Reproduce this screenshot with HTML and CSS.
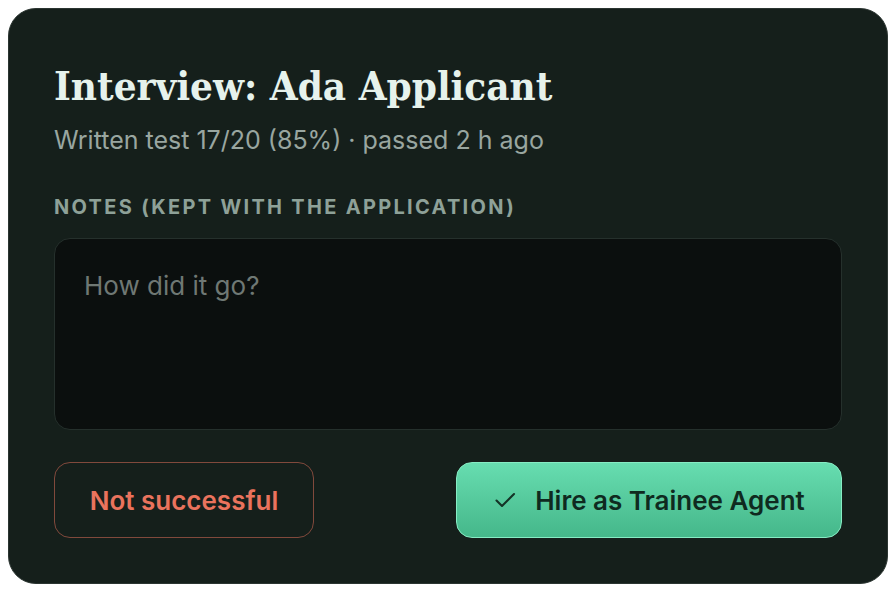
FILE: index.html
```html
<!DOCTYPE html>
<html>
<head>
<meta charset="utf-8">
<link rel="stylesheet" href="styles.css">
</head>
<body>
<div class="card">
  <h1 class="title">Interview: Ada Applicant</h1>
  <p class="subtitle">Written test 17/20 (85%) · passed 2 h ago</p>
  <label class="label" for="notes">NOTES (KEPT WITH THE APPLICATION)</label>
  <textarea id="notes" class="notes" placeholder="How did it go?"></textarea>
  <div class="actions">
    <button class="btn btn-reject">Not successful</button>
    <button class="btn btn-hire">
      <svg class="check" width="24" height="24" viewBox="0 0 24 24" fill="none" stroke="currentColor" stroke-width="2.1" stroke-linecap="round" stroke-linejoin="round"><path d="M3.5 12.5l5.5 5.5L21 6"/></svg>
      <span>Hire as Trainee Agent</span>
    </button>
  </div>
</div>
</body>
</html>
```
FILE: styles.css
```css
html, body {
  margin: 0;
  padding: 0;
  background: #ffffff;
}
body {
  padding: 8px;
  font-family: Inter, "Noto Sans", sans-serif;
}
.card {
  box-sizing: border-box;
  width: 880px;
  height: 576px;
  background: #151f1b;
  border: 1px solid #2b3531;
  border-radius: 28px;
  padding: 53px 45px 45px 45px;
  display: flex;
  flex-direction: column;
}
.title {
  margin: 0;
  font-family: "DejaVu Serif Condensed", "DejaVu Serif", serif;
  font-stretch: condensed;
  font-weight: 700;
  font-size: 40px;
  line-height: 48px;
  color: #e6f2ec;
}
.subtitle {
  margin: 15px 0 0 0;
  font-size: 25px;
  line-height: 30px;
  color: #99a6a0;
}
.label {
  margin-top: 40px;
  font-size: 20px;
  line-height: 24px;
  font-weight: 700;
  letter-spacing: 2.3px;
  color: #8ea198;
}
.notes {
  box-sizing: border-box;
  margin-top: 19px;
  width: 100%;
  height: 192px;
  resize: none;
  background: #0b0f0e;
  border: 1px solid #25302c;
  border-radius: 16px;
  padding: 31px 29px;
  font-family: Inter, "Noto Sans", sans-serif;
  font-size: 26px;
  line-height: 32px;
  color: #dfe8e4;
  outline: none;
}
.notes::placeholder {
  color: #6f7874;
}
.actions {
  margin-top: 32px;
  display: flex;
  justify-content: space-between;
}
.btn {
  box-sizing: border-box;
  height: 76px;
  border-radius: 16px;
  font-family: Inter, "Noto Sans", sans-serif;
  font-size: 26px;
  font-weight: 600;
  display: flex;
  align-items: center;
  justify-content: center;
  cursor: pointer;
}
.btn-reject {
  width: 260px;
  background: transparent;
  border: 1.5px solid #81493c;
  color: #ea735d;
}
.btn-hire {
  width: 386px;
  gap: 18px;
  background: linear-gradient(180deg, #67ddb0 0%, #45b78a 100%);
  border: 1.5px solid #86ecc4;
  color: #0f2a1f;
}
.check {
  color: #143326;
}
```
